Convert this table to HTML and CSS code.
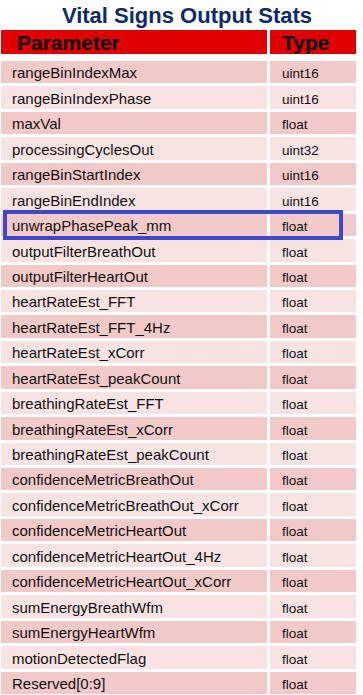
FILE: index.html
```html
<!DOCTYPE html>
<html lang="en">
<head>
    <meta charset="UTF-8">
    <meta name="viewport" content="width=device-width, initial-scale=1.0">
    <title>Vital Signs Output Stats</title>
    <link rel="stylesheet" href="styles.css">
</head>
<body>

<h1 class="title">Vital Signs Output Stats</h1>

<div id="stats-table">
    <div class="head name">Parameter</div>
    <div class="head type">Type</div>
    <div class="highlight"></div>
</div>

<script>
    const stats = [
        ["rangeBinIndexMax", "uint16"],
        ["rangeBinIndexPhase", "uint16"],
        ["maxVal", "float"],
        ["processingCyclesOut", "uint32"],
        ["rangeBinStartIndex", "uint16"],
        ["rangeBinEndIndex", "uint16"],
        ["unwrapPhasePeak_mm", "float"],
        ["outputFilterBreathOut", "float"],
        ["outputFilterHeartOut", "float"],
        ["heartRateEst_FFT", "float"],
        ["heartRateEst_FFT_4Hz", "float"],
        ["heartRateEst_xCorr", "float"],
        ["heartRateEst_peakCount", "float"],
        ["breathingRateEst_FFT", "float"],
        ["breathingRateEst_xCorr", "float"],
        ["breathingRateEst_peakCount", "float"],
        ["confidenceMetricBreathOut", "float"],
        ["confidenceMetricBreathOut_xCorr", "float"],
        ["confidenceMetricHeartOut", "float"],
        ["confidenceMetricHeartOut_4Hz", "float"],
        ["confidenceMetricHeartOut_xCorr", "float"],
        ["sumEnergyBreathWfm", "float"],
        ["sumEnergyHeartWfm", "float"],
        ["motionDetectedFlag", "float"],
        ["Reserved[0:9]", "float"]
    ];

    function renderStats() {
        const table = document.getElementById("stats-table");
        stats.forEach((stat, index) => {
            const shade = index % 2 === 0 ? "dark" : "light";
            const name = document.createElement("div");
            name.className = "cell name " + shade;
            name.textContent = stat[0];
            const type = document.createElement("div");
            type.className = "cell type " + shade;
            type.textContent = stat[1];
            table.appendChild(name);
            table.appendChild(type);
        });
    }

    renderStats();
</script>

</body>
</html>
```

FILE: styles.css
```css
body {
    font-family: "Liberation Sans", Arial, sans-serif;
    margin: 0;
    padding: 0;
    background-color: #fff;
}

.title {
    margin: 0;
    height: 30px;
    padding-left: 11px;
    text-align: center;
    font-size: 22px;
    line-height: 32px;
    color: #10296a;
}

#stats-table {
    position: relative;
    display: grid;
    grid-template-columns: 266px 86px;
    grid-template-rows: 28px;
    grid-auto-rows: 22.45px;
    column-gap: 3px;
    row-gap: 3px;
    margin-left: 1px;
}

/* header row keeps a wider white band below it */
.head {
    background-color: #e00000;
    color: #000;
    font-weight: bold;
    font-size: 21px;
    line-height: 25px;
    height: 24px;
    overflow: hidden;
    margin-bottom: 4px;
}

.head.name {
    padding-left: 16px;
}

.head.type {
    padding-left: 12px;
}

.cell {
    display: flex;
    align-items: flex-end;
    color: #111;
}

.cell.name {
    padding-left: 11px;
    font-size: 15px;
    line-height: 18px;
    padding-bottom: 1px;
}

.cell.type {
    padding-left: 12px;
    font-size: 13.5px;
    line-height: 17px;
    padding-bottom: 1px;
}

.dark {
    background-color: #f2c9c9;
}

.light {
    background-color: #f8e3e3;
}

.highlight {
    position: absolute;
    left: 2px;
    top: 180px;
    width: 332px;
    height: 22px;
    border: 4px solid #3f48cc;
    z-index: 1;
}
```
